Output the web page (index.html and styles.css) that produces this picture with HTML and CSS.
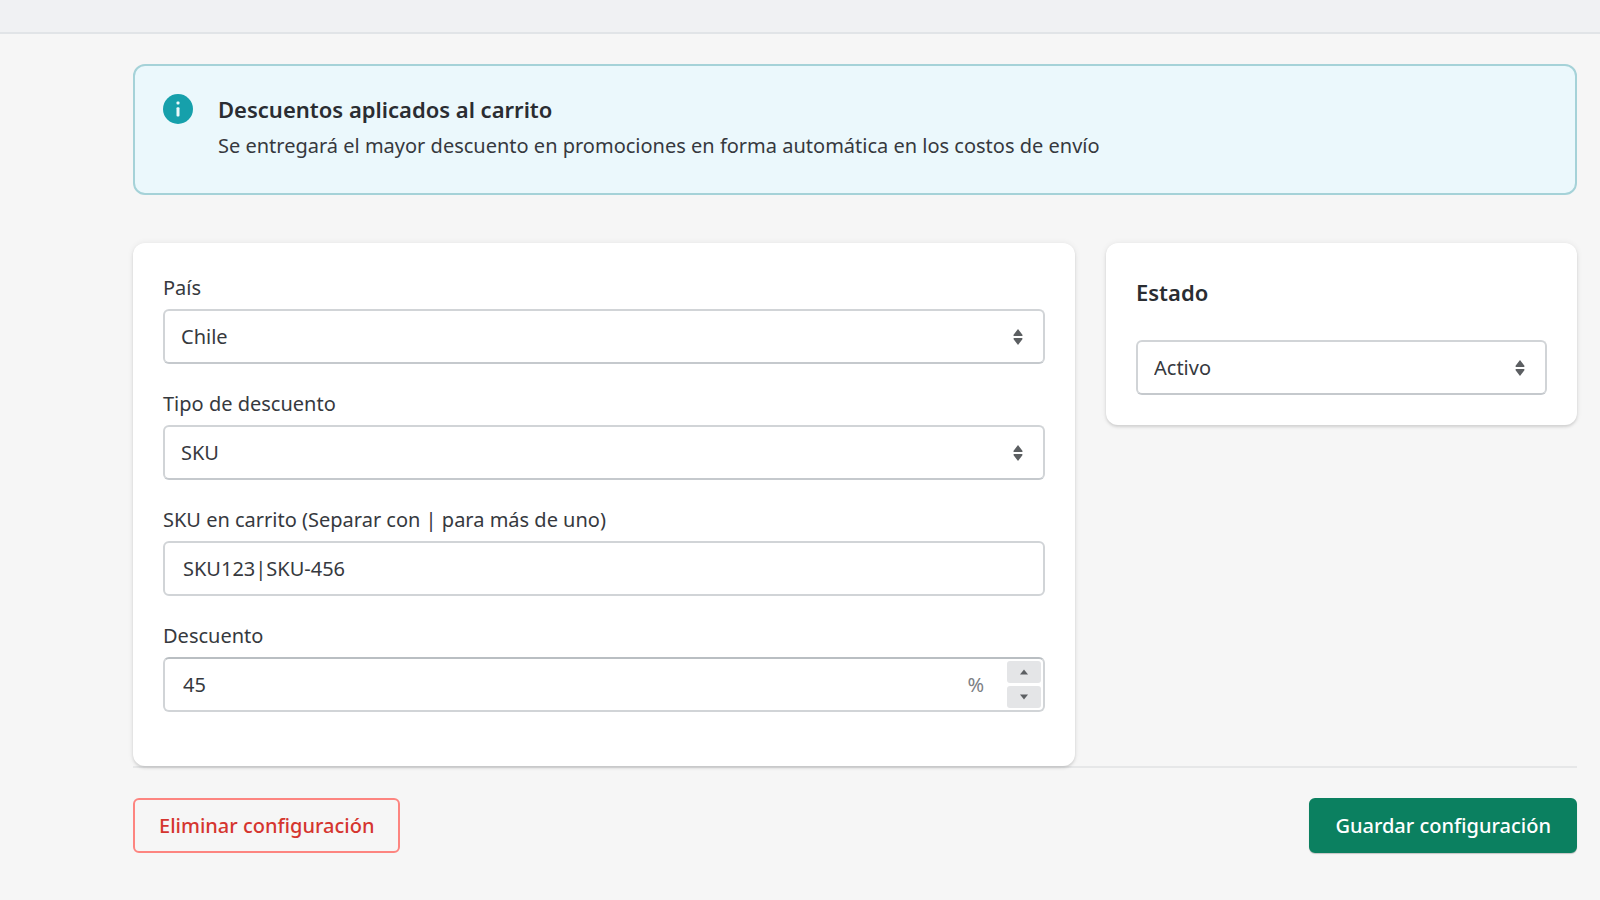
FILE: index.html
```html
<!DOCTYPE html>
<html lang="es">
<head>
<meta charset="utf-8">
<meta name="viewport" content="width=device-width, initial-scale=1">
<title>Descuentos</title>
<link rel="stylesheet" href="styles.css">
</head>
<body>
<header class="topbar"></header>
<main class="page">
  <section class="banner">
    <svg class="banner-icon" viewBox="0 0 30 30" aria-hidden="true">
      <circle cx="15" cy="15" r="15" fill="#16a0ab"/>
      <rect x="13.5" y="7.6" width="3" height="3" rx="1" fill="#ebf9fc"/>
      <rect x="13.5" y="13.2" width="3" height="9.4" rx="1" fill="#ebf9fc"/>
    </svg>
    <div>
      <h1 class="heading">Descuentos aplicados al carrito</h1>
      <p class="banner-text">Se entregará el mayor descuento en promociones en forma automática en los costos de envío</p>
    </div>
  </section>

  <form class="form">
    <div class="columns">
      <section class="card card-main">
        <div class="field">
          <label class="label" for="pais">País</label>
          <div class="control">
            <select class="input select" id="pais"><option>Chile</option></select>
            <svg class="arrows" viewBox="0 0 10 16" aria-hidden="true"><path d="M5 0 9.4 5.8Q9.8 7 8.8 7H1.2Q.2 7 .6 5.8ZM5 16 .6 10.2Q.2 9 1.2 9H8.8Q9.8 9 9.4 10.2Z"/></svg>
          </div>
        </div>
        <div class="field">
          <label class="label" for="tipo">Tipo de descuento</label>
          <div class="control">
            <select class="input select" id="tipo"><option>SKU</option></select>
            <svg class="arrows" viewBox="0 0 10 16" aria-hidden="true"><path d="M5 0 9.4 5.8Q9.8 7 8.8 7H1.2Q.2 7 .6 5.8ZM5 16 .6 10.2Q.2 9 1.2 9H8.8Q9.8 9 9.4 10.2Z"/></svg>
          </div>
        </div>
        <div class="field">
          <label class="label" for="sku">SKU en carrito (Separar con | para más de uno)</label>
          <input class="input text" id="sku" type="text" value="SKU123|SKU-456">
        </div>
        <div class="field">
          <label class="label" for="descuento">Descuento</label>
          <div class="input number">
            <input class="number-value" id="descuento" type="text" inputmode="numeric" value="45">
            <span class="suffix">%</span>
            <div class="spinner">
              <button class="step" type="button" aria-label="Aumentar"><svg class="step-icon" viewBox="0 0 8 6" aria-hidden="true"><path d="M4 .5 8 5.4H0Z"/></svg></button>
              <button class="step" type="button" aria-label="Disminuir"><svg class="step-icon" viewBox="0 0 8 6" aria-hidden="true"><path d="M4 5.5 0 .6H8Z"/></svg></button>
            </div>
          </div>
        </div>
      </section>

      <section class="card card-side">
        <h2 class="heading"><label for="estado">Estado</label></h2>
        <div class="control">
          <select class="input select" id="estado"><option>Activo</option></select>
          <svg class="arrows" viewBox="0 0 10 16" aria-hidden="true"><path d="M5 0 9.4 5.8Q9.8 7 8.8 7H1.2Q.2 7 .6 5.8ZM5 16 .6 10.2Q.2 9 1.2 9H8.8Q9.8 9 9.4 10.2Z"/></svg>
        </div>
      </section>
    </div>

    <footer class="actions">
      <button class="button button-delete" type="button">Eliminar configuración</button>
      <button class="button button-save" type="submit">Guardar configuración</button>
    </footer>
  </form>
</main>
</body>
</html>
```

FILE: styles.css
```css
* {
  box-sizing: border-box;
}

body {
  margin: 0;
  background: #f6f6f6;
  color: #36393e;
  font: 20px/30px "Segoe UI", "Noto Sans", "Open Sans", sans-serif;
}

.topbar {
  height: 34px;
  background: #f0f1f3;
  border-bottom: 2px solid #e1e4e7;
}

.page {
  padding: 30px 23px 40px 133px;
}

.banner {
  display: flex;
  gap: 25px;
  padding: 28px 28px 32px;
  background: #ebf8fc;
  border: 2px solid #a5d2d8;
  border-radius: 12px;
}

.banner-icon {
  flex: none;
  width: 30px;
  height: 30px;
}

.heading {
  margin: 0;
  color: #2a2d32;
  font-size: 22px;
  font-weight: 600;
  line-height: 30px;
}

.banner-text {
  margin: 7px 0 0;
}

.form {
  margin-top: 48px;
}

.columns {
  display: grid;
  grid-template-columns: 2fr 1fr;
  align-items: start;
  gap: 31px;
}

.card {
  background: #fff;
  border-radius: 12px;
  box-shadow: 0 0 6px rgba(23, 24, 24, 0.07), 0 2px 3px rgba(0, 0, 0, 0.12);
}

.card-main {
  display: grid;
  gap: 25px;
  padding: 30px 30px 54px;
}

.card-side {
  display: grid;
  gap: 33px;
  padding: 34px 30px 30px;
}

.field {
  display: grid;
  gap: 6px;
}

.label {
  line-height: 30px;
}

.control {
  position: relative;
}

.input {
  display: block;
  width: 100%;
  height: 55px;
  margin: 0;
  padding: 0 18px;
  background: #fff;
  border: 2px solid #d1d4d7;
  border-radius: 6px;
  color: inherit;
  font: inherit;
}

.select {
  appearance: none;
  padding: 0 50px 0 16px;
  border-bottom-color: #c5c9cd;
}

.arrows {
  position: absolute;
  top: 50%;
  right: 22px;
  width: 10px;
  height: 16px;
  margin-top: -8px;
  fill: #5c5f62;
  pointer-events: none;
}

.number {
  display: flex;
  align-items: center;
  padding-right: 2px;
  border-top-color: #b9bec2;
}

.number-value {
  flex: 1;
  min-width: 0;
  padding: 0;
  background: none;
  border: 0;
  color: inherit;
  font: inherit;
}

.suffix {
  margin-right: 23px;
  color: #7c8084;
}

.spinner {
  display: grid;
  gap: 3px;
}

.step {
  display: grid;
  place-items: center;
  width: 34px;
  height: 22px;
  padding: 0;
  background: #e4e5e7;
  border: 0;
  border-radius: 3px;
}

.step-icon {
  width: 8px;
  height: 6px;
  fill: #5c5f62;
}

.actions {
  display: flex;
  justify-content: space-between;
  padding-top: 30px;
  border-top: 2px solid #e6e7e8;
}

.button {
  height: 55px;
  padding: 0 24px;
  border: 2px solid;
  border-radius: 6px;
  font: inherit;
  font-weight: 500;
}

.button-delete {
  background: transparent;
  border-color: #fd8580;
  color: #d5352f;
}

.button-save {
  background: #0b8060;
  border-color: #0b8060;
  box-shadow: 0 1px 1px rgba(0, 0, 0, 0.2);
  color: #fff;
}
```
